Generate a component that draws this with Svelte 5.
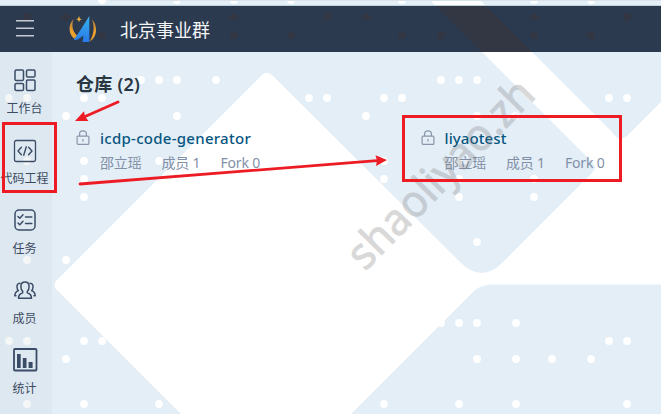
<script>
  const dots = [
    [102, 0], [177, 0], [234, 0], [291, 0], [402, 0], [534, 0], [591, 0],
    [27, 17], [66, 17], [234, 17], [327, 17], [366, 17], [534, 17], [627, 17],
    [102, 35], [234, 35], [291, 35], [402, 35], [441, 35], [534, 35], [591, 35],
    [141, 80], [159, 80], [177, 80], [216, 80], [441, 80], [459, 80], [477, 80],
    [9, 98], [27, 98], [84, 98], [102, 98], [309, 98], [327, 98], [384, 98], [402, 98], [609, 98], [627, 98],
    [66, 116], [177, 116], [366, 116], [477, 116], [515, 116],
    [27, 161], [84, 161], [159, 161], [384, 161], [459, 161],
    [84, 179], [384, 179], [459, 179], [534, 179], [84, 197], [459, 197], [534, 197],
    [477, 242], [27, 260], [66, 260], [441, 323], [459, 323], [477, 323], [516, 323],
    [9, 341], [27, 341], [84, 341], [102, 341], [609, 341], [627, 341],
    [66, 359], [477, 359], [516, 359], [552, 359], [591, 359],
    [27, 404], [84, 404], [159, 404], [384, 404], [459, 404], [516, 404], [627, 404]
  ];
  const nav = [
    { label: '工作台', icon: 'grid' },
    { label: '代码工程', icon: 'code' },
    { label: '任务', icon: 'tasks' },
    { label: '成员', icon: 'members' },
    { label: '统计', icon: 'stats' }
  ];
  const repos = [
    { name: 'icdp-code-generator', spacing: 0.27 },
    { name: 'liyaotest', spacing: 0.1 }
  ];
</script>

{#snippet pattern()}
  <path d="M57 280 L260 77 Q266 69 273 76 L460 262 Q482 284 503 262 L591 174 Q598 168 592 162 L430 0 L480 0 L612 132 Q619 144 629 134 L661 102 V284.5 H492 Q481 284.5 474 291 L351 414 H181 L57 290 Q52 285 57 280 Z" />
  {#each dots as [x, y]}<circle cx={x} cy={y} r="3.9" />{/each}
{/snippet}

<div class="page">
  <svg class="layer" width="661" height="414" fill="#fff">{@render pattern()}</svg>
  <div class="strip"></div>
  <header>
    <svg class="layer" width="661" height="46" viewBox="0 6 661 46" fill="#323743">{@render pattern()}</svg>
    <svg class="menu" width="18" height="18" stroke="#c5cad2" stroke-width="1.4"><path d="M0 1.7H18M0 9.3H18M0 16.7H18" /></svg>
    <svg class="logo" width="28" height="30" viewBox="0 0 28 30">
      <defs>
        <linearGradient id="blue" x2="0" y2="1"><stop stop-color="#39b4ee" /><stop offset="1" stop-color="#2878e8" /></linearGradient>
        <linearGradient id="gold" x2="0" y2="1"><stop stop-color="#ac7d39" /><stop offset=".6" stop-color="#f1a42d" /><stop offset="1" stop-color="#db972e" /></linearGradient>
      </defs>
      <path d="M4.5 5C-1.5 11 -.5 21 6 25L9 22.5C3.5 18 2.2 12 4.5 5ZM22.8 5C29.5 12 28 24 20.5 27.5C25.5 20 25.5 12 22.8 5Z" fill="url(#gold)" />
      <path d="M20.3 2V28H13.5L14.5 21.5L9 25.5L4.5 26.3L11.5 16Z" fill="url(#blue)" />
      <path d="M10 2L10.9 4.5L13 5.3L10.9 6.1L10 8.3L9.1 6.1L7 5.3L9.1 4.5Z" fill="#f0b33c" />
    </svg>
    <span class="org">北京事业群</span>
  </header>
  <div class="body">
    <nav>
      {#each nav as item}
        <div class="item">
          <svg width="26" height="26" viewBox="0 0 26 26" fill="none" stroke="#3b4c67" stroke-width="1.5" stroke-linejoin="round" stroke-linecap="round">
            {#if item.icon === 'grid'}
              <rect x="3" y="3" width="8.5" height="10.5" rx="1.3" /><rect x="14.5" y="3" width="8.5" height="7" rx="1.3" />
              <rect x="3" y="16.5" width="8.5" height="7" rx="1.3" /><rect x="14.5" y="13" width="8.5" height="10.5" rx="1.3" />
            {:else if item.icon === 'code'}
              <rect x="2.5" y="3.5" width="21" height="21" rx="1.7" stroke-width="1.3" />
              <path d="M9.4 10.2L6 14L9.4 17.8M16.6 10.2L20 14L16.6 17.8M14.3 9.8L11.7 18.2" stroke-width="1.4" />
            {:else if item.icon === 'tasks'}
              <rect x="3" y="3" width="20" height="20" rx="4" />
              <path d="M6 9.5L7.8 11.2L11 7.8M6 16L7.8 17.7L11 14.3M13.5 10H19.8M13.5 16.6H19.8" />
            {:else if item.icon === 'members'}
              <path d="M6.5 21.3C6.5 18 8 16.5 10.7 15.7V14.4C9 13 8.9 11.5 8.9 9.4C8.9 6.5 10.5 5 13 5S17.1 6.5 17.1 9.4C17.1 11.5 17 13 15.3 14.4V15.7C18 16.5 19.5 18 19.5 21.3Z" />
              <path d="M8 6.2C5.6 6.2 4.8 8 5 10.3C5.1 11.9 5.6 13 6.4 13.6C4 14.7 2.8 16 2.8 18.7H4M18 6.2C20.4 6.2 21.2 8 21 10.3C20.9 11.9 20.4 13 19.6 13.6C22 14.7 23.2 16 23.2 18.7H22" />
            {:else}
              <rect x="2" y="2" width="22.5" height="21.5" rx="1" stroke-width="1.8" />
              <path d="M5 7H8.7V21H5ZM10.8 11H14.5V21H10.8ZM16.6 15H20.6V21H16.6Z" fill="#3b4c67" stroke="none" />
            {/if}
          </svg>
          <span>{item.label}</span>
        </div>
      {/each}
    </nav>
    <main>
      <h1>仓库 (2)</h1>
      <div class="repos">
        {#each repos as repo}
          <article>
            <svg width="14" height="16" fill="none" stroke="#8995ab" stroke-width="1.2">
              <rect x="1.1" y="6.1" width="11.8" height="8.3" rx="1" /><path d="M3.6 6V3.8Q3.6 .8 7 .8T10.4 3.8V6M7 9V11.5" />
            </svg>
            <div class="info">
              <div class="name" style="letter-spacing: {repo.spacing}px">{repo.name}</div>
              <div class="meta"><span>邵立瑶</span><span>成员 1</span><span>Fork 0</span></div>
            </div>
          </article>
        {/each}
      </div>
    </main>
  </div>
  <svg class="layer" width="661" height="414">
    <text class="watermark" transform="translate(365 272) rotate(-45.5)" textLength="246" lengthAdjust="spacingAndGlyphs">shaoliyao.zh</text>
    <g fill="none" stroke="#ed1c24" stroke-width="3">
      <rect x="3.5" y="123.5" width="52" height="68" />
      <rect x="403.5" y="116.5" width="217" height="64" />
      <path d="M118 102L84 117M80 184L377 160.6" stroke-linecap="round" stroke-width="2.8" />
    </g>
    <path d="M75 121L84 111.2L85 116.5L88.5 121ZM387 160L375.5 155.2L377 160.5L376 166Z" fill="#ed1c24" />
  </svg>
</div>

<style>
  .page { position: relative; width: 661px; height: 414px; overflow: hidden; background: #e4eef7; font-family: "Noto Sans", "Noto Sans CJK SC", sans-serif; }
  .layer { position: absolute; left: 0; top: 0; pointer-events: none; }
  .strip { position: relative; box-sizing: border-box; height: 6px; border-bottom: 1px solid #bfd2db; }
  .strip::before { content: ""; display: block; height: 1px; margin-left: 110px; background: #d9e2e9; }
  header { position: relative; display: flex; align-items: center; height: 46px; box-sizing: border-box; padding-left: 16px; background: #2c3a4f; }
  .menu { position: relative; margin-bottom: 2px; }
  .logo { position: relative; margin-left: 35px; margin-bottom: 1px; }
  .org { position: relative; margin-left: 23px; font: 18px/24px "Noto Sans CJK SC", sans-serif; color: #f5f6f8; }
  .body { position: relative; display: flex; height: 362px; }
  nav { flex: 0 0 52px; padding-top: 15px; box-sizing: border-box; background: rgba(188, 198, 200, .15); }
  .item { display: flex; flex-direction: column; align-items: center; width: 49px; height: 70px; color: #3b4b63; }
  .item span { margin-top: 6px; font: 12px/18px "Noto Sans CJK SC", sans-serif; white-space: nowrap; }
  .item svg { flex: none; }
  main { flex: 1; padding: 20px 0 0 24px; }
  h1 { margin: 0; font-size: 18px; line-height: 24px; font-weight: 600; color: #293743; letter-spacing: .25px; }
  .repos { display: grid; grid-template-columns: 344.5px 1fr; margin-top: 31px; }
  article { display: flex; gap: 10px; }
  article svg { flex: none; margin-top: 3px; }
  .name { font-size: 15px; line-height: 22px; font-weight: 500; color: #075680; white-space: nowrap; }
  .meta { display: flex; gap: 20px; margin-top: 4px; font-size: 14px; line-height: 20px; color: #8290a7; white-space: nowrap; letter-spacing: -.18px; }
  .watermark { font-family: "Noto Sans", sans-serif; font-size: 44px; fill: #777; stroke: #777; stroke-width: .9; opacity: .28; }
</style>
